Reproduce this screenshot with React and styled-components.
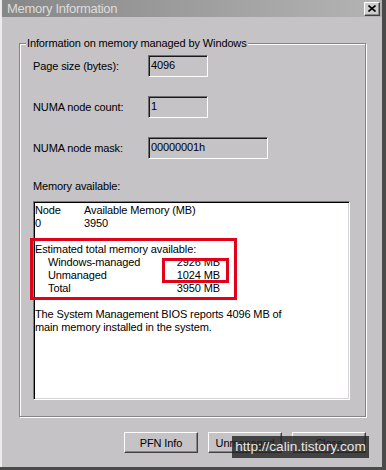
import styled, { createGlobalStyle } from "styled-components";

const GlobalStyle = createGlobalStyle`
  html, body {
    margin: 0;
    padding: 0;
  }
  body {
    background: #4a4a4a;
    font-family: "Liberation Sans", Arial, sans-serif;
    font-size: 11px;
    letter-spacing: -0.12px;
    color: #000;
  }
`;

const Screen = styled.div`
  width: 386px;
  height: 470px;
  overflow: hidden;
  background: #4a4a4a;
`;

const Window = styled.div`
  width: 380px;
  height: 467px;
  border-left: 2px solid #ececec;
  background: #c5c3c6;
  display: flex;
  flex-direction: column;
`;

const TitleBar = styled.div`
  height: 17px;
  display: flex;
  align-items: center;
  justify-content: space-between;
  padding: 0 2px 0 5px;
  background: linear-gradient(to right, #878787, #b4b4b4);
`;

const Title = styled.span`
  color: #dcdcdc;
  font-size: 13px;
  letter-spacing: -0.3px;
  line-height: 17px;
`;

const CloseButton = styled.div`
  width: 16px;
  height: 14px;
  box-sizing: border-box;
  display: flex;
  align-items: center;
  justify-content: center;
  background: #cfcdcf;
  border: 1px solid;
  border-color: #fff #404040 #404040 #fff;
  box-shadow: inset -1px -1px 0 #8a8a8a;
`;

const Body = styled.div`
  display: flex;
  flex-direction: column;
  padding: 26px 16px 0 17px;
`;

const GroupBox = styled.div`
  display: flex;
  flex-direction: column;
  align-items: flex-start;
  padding: 0 15px 16px 13px;
  border: 1px solid #858585;
  box-shadow: inset 1px 1px 0 #fff, 1px 1px 0 #fff;
`;

const Legend = styled.div`
  margin: -8px 0 0 -7px;
  padding: 0 1px;
  line-height: 14px;
  background: #c5c3c6;
`;

const Fields = styled.div`
  display: grid;
  grid-template-columns: 115px auto;
  row-gap: 19px;
  align-items: center;
  margin-top: 5px;
`;

const Label = styled.div`
  line-height: 14px;
`;

const Field = styled.div`
  width: ${(p) => p.$width}px;
  height: 22px;
  box-sizing: border-box;
  padding-left: 2px;
  line-height: 19px;
  border: 1px solid;
  border-color: #6e6e6e #fff #fff #6e6e6e;
  box-shadow: inset 1px 1px 0 #1a1a1a;
`;

const MemLabel = styled(Label)`
  margin-top: 20px;
`;

const ListBox = styled.div`
  margin-top: 8px;
  width: 317px;
  height: 199px;
  box-sizing: border-box;
  padding: 2px 2px 0 1px;
  background: #fff;
  border: 1px solid;
  border-color: #7a7a7a #fff #fff #7a7a7a;
  box-shadow: inset 1px 1px 0 #000, inset -1px -1px 0 #d6d4d6;
  line-height: 13px;
`;

const NodeRow = styled.div`
  display: grid;
  grid-template-columns: 49px auto;
`;

const Section = styled.div`
  position: relative;
  margin-top: 13px;
`;

const MemRow = styled.div`
  display: grid;
  grid-template-columns: 13px 100px 72px;
`;

const Value = styled.span`
  text-align: right;
`;

const Highlight = styled.div`
  position: absolute;
  left: ${(p) => p.$left}px;
  top: ${(p) => p.$top}px;
  width: ${(p) => p.$w}px;
  height: ${(p) => p.$h}px;
  box-sizing: border-box;
  border: 3px solid #e2001a;
`;

const Note = styled.div`
  margin-top: 13px;
`;

const ButtonRow = styled.div`
  position: relative;
  display: flex;
  justify-content: flex-end;
  gap: 10px;
  margin-top: 15px;
`;

const Button = styled.button`
  width: 74px;
  height: 21px;
  padding: 0;
  box-sizing: border-box;
  background: #c5c3c6;
  border: 1px solid;
  border-color: #fff #404040 #404040 #fff;
  box-shadow: inset -1px -1px 0 #868686;
  font-family: "Liberation Sans", Arial, sans-serif;
  font-size: 11px;
  letter-spacing: -0.12px;
  color: #000;
`;

const Watermark = styled.div`
  position: absolute;
  right: -3px;
  top: 4px;
  width: 137px;
  height: 22px;
  background: rgba(34, 34, 34, 0.8);
  color: #e6e6e6;
  font-size: 13.6px;
  letter-spacing: 0;
  line-height: 22px;
  text-align: center;
  white-space: nowrap;
`;

const managed = [
  ["Windows-managed", "2926 MB"],
  ["Unmanaged", "1024 MB"],
  ["Total", "3950 MB"],
];

export default function App() {
  return (
    <Screen>
      <GlobalStyle />
      <Window>
        <TitleBar>
          <Title>Memory Information</Title>
          <CloseButton>
            <svg width="8" height="7" viewBox="0 0 8 7">
              <path d="M0.5 0.5 L7.5 6.5 M7.5 0.5 L0.5 6.5" stroke="#000" strokeWidth="1.6" />
            </svg>
          </CloseButton>
        </TitleBar>
        <Body>
          <GroupBox>
            <Legend>Information on memory managed by Windows</Legend>
            <Fields>
              <Label>Page size (bytes):</Label>
              <Field $width={60}>4096</Field>
              <Label>NUMA node count:</Label>
              <Field $width={60}>1</Field>
              <Label>NUMA node mask:</Label>
              <Field $width={120}>00000001h</Field>
            </Fields>
            <MemLabel>Memory available:</MemLabel>
            <ListBox>
              <NodeRow>
                <span>Node</span>
                <span>Available Memory (MB)</span>
              </NodeRow>
              <NodeRow>
                <span>0</span>
                <span>3950</span>
              </NodeRow>
              <Section>
                <div>Estimated total memory available:</div>
                {managed.map(([name, value]) => (
                  <MemRow key={name}>
                    <span />
                    <span>{name}</span>
                    <Value>{value}</Value>
                  </MemRow>
                ))}
                <Highlight $left={-5} $top={-5} $w={207} $h={62} />
                <Highlight $left={127} $top={15} $w={67} $h={25} />
              </Section>
              <Note>
                The System Management BIOS reports 4096 MB of
                <br />
                main memory installed in the system.
              </Note>
            </ListBox>
          </GroupBox>
          <ButtonRow>
            <Button>PFN Info</Button>
            <Button>Unmanaged</Button>
            <Button>Close</Button>
            <Watermark>http://calin.tistory.com</Watermark>
          </ButtonRow>
        </Body>
      </Window>
    </Screen>
  );
}
